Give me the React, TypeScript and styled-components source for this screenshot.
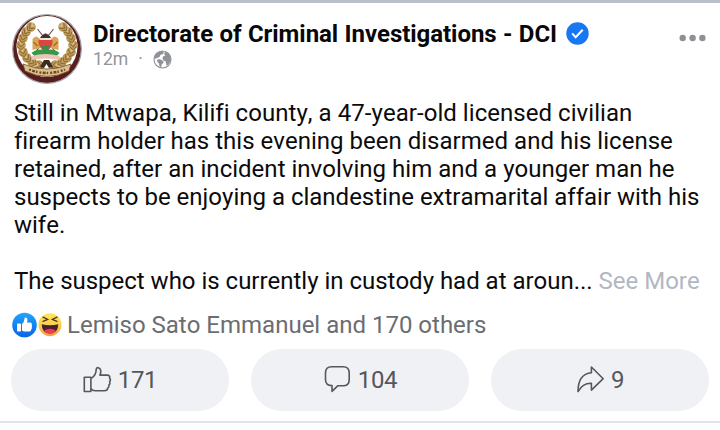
import * as React from "react";
import { createGlobalStyle, styled } from "styled-components";

const GlobalStyle = createGlobalStyle`
    body {
        margin: 0;
        background: #ffffff;
        font-family: Roboto, "Liberation Sans", sans-serif;
        font-kerning: none;
        font-variant-ligatures: none;
    }
`;

const Post = styled.article`
    box-sizing: border-box;
    width: 720px;
    height: 423px;
    border-top: 3px solid #bbbfc8;
    border-bottom: 2px solid #e1e2e9;
    overflow: hidden;
`;

const Header = styled.header`
    display: flex;
    align-items: flex-start;
    height: 96px;
    padding: 11px 14px 0 12px;
    box-sizing: border-box;
`;

const Heading = styled.div`
    flex: 1;
    padding: 6px 0 0 11px;
`;

const TitleRow = styled.div`
    display: flex;
    align-items: center;
    gap: 9px;
    height: 27px;
`;

const Title = styled.h1`
    margin: 0;
    font-size: 24px;
    font-weight: 700;
    line-height: 28px;
    word-spacing: 0.5px;
    letter-spacing: -0.05px;
    white-space: nowrap;
    color: #080809;
`;

const MetaRow = styled.div`
    display: flex;
    align-items: center;
    gap: 10px;
    height: 24px;
    font-size: 17.6px;
    line-height: 22px;
    color: #919499;
`;

const MoreButton = styled.button`
    display: flex;
    margin: 20px 0 0;
    padding: 0;
    border: 0;
    background: none;
`;

const Message = styled.div`
    padding: 0 0 0 14px;
    font-size: 24px;
    line-height: 28px;
    color: #0b0b0c;
`;

const Line = styled.div<{ $tracking?: number }>`
    height: 28px;
    letter-spacing: ${({ $tracking = 0 }) => $tracking}px;
    white-space: pre;
`;

const SeeMore = styled.span`
    color: #b2b7c4;
`;

const Reactions = styled.div`
    display: flex;
    align-items: center;
    height: 28px;
    margin-top: 16px;
    padding-left: 12px;
`;

const ReactionNames = styled.span`
    margin-left: 4px;
    font-size: 24px;
    line-height: 28px;
    white-space: nowrap;
    color: #6b6d71;
`;

const Actions = styled.div`
    display: flex;
    gap: 22px;
    margin-top: 10px;
    padding: 0 11px;
`;

const ActionButton = styled.button`
    display: flex;
    flex: 1;
    align-items: center;
    justify-content: center;
    gap: 5px;
    height: 62px;
    padding: 0;
    border: 0;
    border-radius: 31px;
    background: #f0f1f5;
    font: 400 24px/28px Roboto, "Liberation Sans", sans-serif;
    letter-spacing: -0.4px;
    color: #55575b;
`;

const lines = [
    { text: "Still in Mtwapa, Kilifi county, a 47-year-old licensed civilian", tracking: 0.05 },
    { text: "firearm holder has this evening been disarmed and his license", tracking: 0.015 },
    { text: "retained, after an incident involving him and a younger man he", tracking: 0.02 },
    { text: "suspects to be enjoying a clandestine extramarital affair with his" },
    { text: "wife." },
    { text: "" },
];

// Leaves along one side of the crest, mirrored for the other.
const leaves = [
    [-8, 16, 80],
    [-15, 13, 60],
    [-20, 9, 40],
    [-24, 3, 15],
    [-26, -4, -5],
    [-24, -11, -18],
    [-21, -17, -32],
    [-16, -22, -48],
];

const Wreath = () => (
    <>
        {leaves.map(([x, y, angle]) => (
            <g key={`${x}:${y}`} transform={`translate(${x} ${y}) rotate(${-angle})`}>
                <ellipse rx="4.8" ry="4.8" fill="#bd9a58" />
                <path d="M-3.5-2L0 2 3.5-2M-3 2L0 5 3 2" fill="none" stroke="#8a6635" strokeWidth=".9" />
                <path d="M-2-4L0-1 2-4" fill="none" stroke="#e3c88f" strokeWidth="1" />
            </g>
        ))}
    </>
);

const Avatar = () => (
    <svg width="70" height="70" viewBox="-35 -35 70 70">
        <circle r="34.3" fill="#571d1e" stroke="#a3a1a5" strokeWidth="1.2" />
        <circle cy="-2.5" r="30.5" fill="#ffffff" />
        <Wreath />
        <g transform="scale(-1 1)">
            <Wreath />
        </g>
        <g transform="translate(-1.5 -2)">
            <path d="M-8-18L10 5M8-18L-10 5" stroke="#6d563f" strokeWidth="1.2" />
            <path d="M-13-8q4-5 7 0l1 9-8 2zM13-8q-4-5-7 0l-1 9 8 2z" fill="#dba651" />
            <path d="M-12-5l4 4M12-5l-4 4" stroke="#9b6a2c" strokeWidth="1.3" />
            <path d="M0-14q7 4 7 9T0 6q-7-6-7-11t7-9z" fill="#d8463e" />
            <path d="M-4-11Q0-15 4-11l1 2H-5z" fill="#3a3532" />
            <path d="M-6-9H6v2H-6z" fill="#efe6dc" />
            <path d="M-4-1H4L2 3H-2z" fill="#3c8d45" />
            <path d="M-14 6q5-5 14-3 9-2 14 3l-4 4H-10z" fill="#329a49" />
            <path d="M-14 9q14-4 28 0v4q-14-3-28 0z" fill="#ecc5b4" />
        </g>
        <path d="M-7 18l4-7h5l4 7-4 1-2.5-4-2.5 4z" fill="#3c2b20" />
        <path d="M-24 15q24 10 48 0l-2 7q-22 11-44 0z" fill="#dcc08a" stroke="#704422" strokeWidth=".8" />
        <path
            d="M-18 20.5q18 7 36 0"
            fill="none"
            stroke="#6a4a2c"
            strokeWidth="2.4"
            strokeDasharray="2 1.3 3 1 1.5 2"
        />
    </svg>
);

const Verified = () => (
    <svg width="23" height="23" viewBox="0 0 23 23">
        <circle cx="11.5" cy="11.5" r="11.2" fill="#1877f2" />
        <path d="M6.2 11.3l3.5 4 7-7.6" fill="none" stroke="#ffffff" strokeWidth="2" />
    </svg>
);

const Globe = () => (
    <svg width="19" height="19" viewBox="0 0 19 19">
        <circle cx="9.5" cy="9.5" r="8.5" fill="#ffffff" stroke="#8f9297" strokeWidth="1.1" />
        <path
            d="M1.6 6Q4.5 1.2 9.8 1.1L11 3 9 4.6 7.4 4.8 7 6.6 5.3 7.6 3.6 8.2 1.2 9z"
            fill="#8f9297"
        />
        <path d="M4.2 9.6l3-.4 3 1.8.4 1.4-1.9 2-.6 2.8-1.5-.8-.8-3.2-1.6-1.5z" fill="#8f9297" />
        <path
            d="M12.2 1.6q5.3 2.2 5.7 8l-1.6 3.6-2 2.2-1-.4-.5-3.6-2.4-1-1-2.1.9-2 2.2-.8L11 4.2z"
            fill="#8f9297"
        />
    </svg>
);

const Dots = () => (
    <svg width="27" height="8" viewBox="0 0 27 8">
        <circle cx="3.7" cy="4" r="3.2" fill="#8f9095" />
        <circle cx="13.6" cy="4" r="3.2" fill="#8f9095" />
        <circle cx="23.4" cy="4" r="3.2" fill="#8f9095" />
    </svg>
);

const LikeReaction = () => (
    <svg width="25" height="26" viewBox="0 0 25 26">
        <defs>
            <linearGradient id="likeFill" x2="0" y2="1">
                <stop stopColor="#20a4fb" />
                <stop offset="1" stopColor="#0865e8" />
            </linearGradient>
        </defs>
        <circle cx="12.5" cy="13" r="12.3" fill="url(#likeFill)" />
        <rect x="5" y="11.5" width="4" height="8" rx=".8" fill="#ffffff" />
        <path
            d="M10 12q2.3-1.8 2.5-5.2.1-1.3 1.2-1.2 2.6.4 1.3 4.9h3.5q2 .4 1.2 2.4 1 1 .1 2.2.5 1.4-.5 2.1.1 2.2-2.1 2.2h-4.5q-1.6 0-2.7-1z"
            fill="#ffffff"
        />
    </svg>
);

const HahaReaction = () => (
    <svg width="26" height="26" viewBox="0 0 26 26">
        <defs>
            <linearGradient id="hahaFill" x2="0" y2="1">
                <stop stopColor="#ffe45b" />
                <stop offset=".5" stopColor="#fcd04c" />
                <stop offset="1" stopColor="#f5a044" />
            </linearGradient>
        </defs>
        <circle cx="13" cy="12.7" r="11.5" fill="url(#hahaFill)" />
        <path d="M4.7 12.2q8.3 2 16.6 0-.2 9.3-8.3 9.3t-8.3-9.3z" fill="#4a2030" />
        <path d="M7.2 18.5q5.8-3.7 11.6 0-2 3.2-5.8 3.2t-5.8-3.2z" fill="#ef3c55" />
        <path
            d="M6 5.2l4.6 2.3L6 9.3M20 5.2l-4.6 2.3L20 9.3"
            fill="none"
            stroke="#4b3422"
            strokeWidth="1.3"
            strokeLinecap="round"
        />
    </svg>
);

const actionIcon = {
    width: 30,
    height: 30,
    viewBox: "0 0 30 30",
    fill: "none",
    stroke: "#55575b",
    strokeWidth: 1.6,
    strokeLinejoin: "round",
} as const;

const LikeIcon = () => (
    <svg {...actionIcon}>
        <path d="M1.3 12.3h6.6v14.2H1.3z" />
        <path d="M8.4 13.4c3.3-2.4 4.8-5.4 4.8-8.9 0-1.3.8-2 2-1.8 3 .6 3.2 4.2 1.7 7.4h7.3c2 0 3 1.3 2.4 3 1 1.2 1 2.5.1 3.6.5 1.4.2 2.6-.8 3.5.2 1.2-.1 2.2-1.1 2.9-.3 1.9-1.5 2.6-3.4 2.6h-9.2c-2.1 0-3.3-.6-4.3-2" />
    </svg>
);

const CommentIcon = () => (
    <svg {...actionIcon}>
        <path d="M8.7 1.8H20q6.2 0 6.2 6.2v6.8q0 6-6.2 6h-5.3L9 26.3v-5.7Q2.5 20.4 2.5 14.4V8q0-6.2 6.2-6.2z" />
    </svg>
);

const ShareIcon = () => (
    <svg {...actionIcon}>
        <path d="M15.4 2v5.7C7.2 8.5 2 14.4 2 26.6c3.2-6 6.9-8.6 13.4-8.4v6.9l11.8-11.4z" />
    </svg>
);

type ActionProps = {
    icon: React.ReactNode;
    count: number;
};

const Action = ({ icon, count }: ActionProps) => (
    <ActionButton>
        {icon}
        <span>{count}</span>
    </ActionButton>
);

const App = () => {
    return (
        <>
            <GlobalStyle />
            <Post>
                <Header>
                    <Avatar />
                    <Heading>
                        <TitleRow>
                            <Title>Directorate of Criminal Investigations - DCI</Title>
                            <Verified />
                        </TitleRow>
                        <MetaRow>
                            <span>12m</span>
                            <span>·</span>
                            <Globe />
                        </MetaRow>
                    </Heading>
                    <MoreButton aria-label="More">
                        <Dots />
                    </MoreButton>
                </Header>
                <Message>
                    {lines.map(({ text, tracking }, index) => (
                        <Line key={index} $tracking={tracking}>
                            {text}
                        </Line>
                    ))}
                    <Line $tracking={-0.015}>
                        The suspect who is currently in custody had at aroun... <SeeMore>See More</SeeMore>
                    </Line>
                </Message>
                <Reactions>
                    <LikeReaction />
                    <HahaReaction />
                    <ReactionNames>Lemiso Sato Emmanuel and 170 others</ReactionNames>
                </Reactions>
                <Actions>
                    <Action icon={<LikeIcon />} count={171} />
                    <Action icon={<CommentIcon />} count={104} />
                    <Action icon={<ShareIcon />} count={9} />
                </Actions>
            </Post>
        </>
    );
};

export default App;
